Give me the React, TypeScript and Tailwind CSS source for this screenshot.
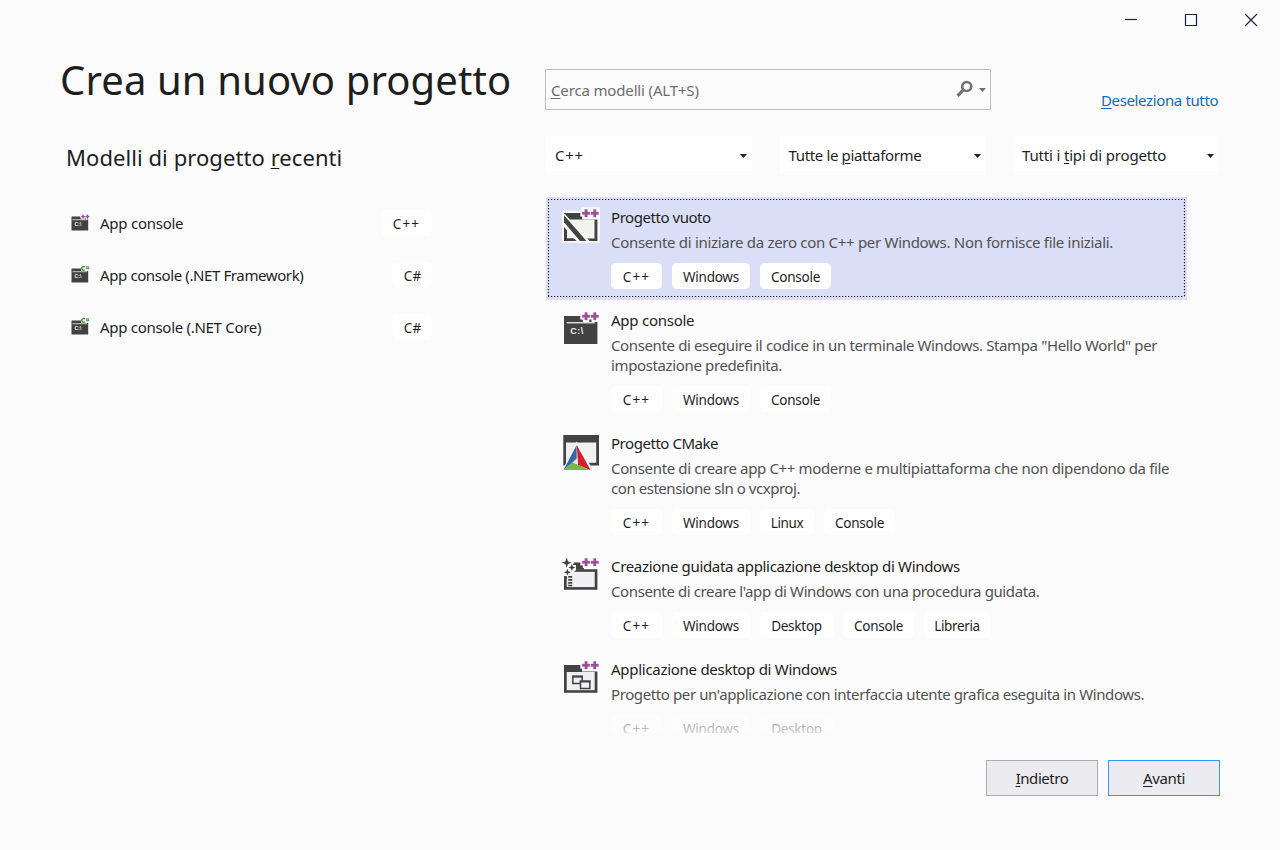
import React from "react";

type IconName = "empty" | "console" | "cmake" | "wizard" | "desktop";

const DARK = "#424242";
const PURPLE = "#9b4f96";
const PLUSES = "M22.8 3.5h2.5v2.5h2.5v2.5h-2.5V11h-2.5V8.5h-2.5V6h2.5zM31.5 3.5H34v2.5h2.5v2.5H34V11h-2.5V8.5H29V6h2.5z";

function PlusPlus() {
  return (
    <>
      <path d={PLUSES} fill="#fbfbfb" stroke="#fbfbfb" strokeWidth="4" />
      <path d={PLUSES} fill={PURPLE} stroke={PURPLE} strokeWidth="0.3" />
    </>
  );
}

function TemplateIcon({ name }: { name: IconName }) {
  return (
    <svg className="block h-[38px] w-[38px]" viewBox="0 0 38 38">
      {name === "empty" && (
        <>
          <path d="M0 4.7h19V1.3h19v35.4H0z" fill="#f8f8f8" />
          <path d="M2 7h18v6.5h15.4V35H2z" fill={DARK} />
          <path d="M5 13.5h27.5v19H5z" fill="#f2f2f1" />
          <path d="M0 5l29 31.5H15L0 19z" fill="#f8f8f8" />
          <path d="M2 9.3L24.5 35H18L2 16.3z" fill={DARK} />
          <path d="M2 21v14h12.5l-2.3-2.5H4.7v-8.3z" fill={DARK} />
          <path d="M3.5 7H19v6H9z" fill={DARK} />
          <PlusPlus />
        </>
      )}
      {name === "console" && (
        <>
          <path d="M2 7h33.4v28H2z" fill={DARK} />
          <path d="M4.7 13.1h28v1.3h-28z" fill="#f0f0f0" />
          <text x="8.3" y="25" fill="#f3f3f3" fontSize="9" fontWeight="700" fontFamily="Liberation Sans, Arial, sans-serif" textLength="13">C:\</text>
          <PlusPlus />
        </>
      )}
      {name === "cmake" && (
        <>
          <path d="M1.3 3H37v30.5H1.3z" fill={DARK} />
          <path d="M4 10.5h30.2v20.3H4z" fill="#f0eff1" />
          <path d="M14.7 9.5L0 39h31.5z" fill="#fbfbfb" />
          <path d="M14.7 13v14L1.3 38.3z" fill="#3568a8" />
          <path d="M14.7 13l14 25.3-12.6-5.4z" fill="#d4202c" />
          <path d="M1.3 38.3l9.2-8 18.2 8z" fill="#79b943" />
          <path d="M14.7 26.4l1.3 6.3-5.5-2.3z" fill="#e3e6e8" />
        </>
      )}
      {name === "wizard" && (
        <>
          <path d="M12 7.5h10v7H9z" fill={DARK} />
          <path d="M2 14.2h33.4v20.6H2z" fill={DARK} />
          <path d="M4.7 16.8h28v15.3h-28z" fill="#f0eff1" />
          <path d="M0 3h10v7h4v5l-4 4H8v3H0z" fill="#fbfbfb" />
          <path d="M4.7 2.6l1.3 3.8 3.8 1.3L6 9l-1.3 3.8L3.4 9-.4 7.7l3.8-1.3zM9.9 8.8l1 2.6 2.6 1-2.6 1-1 2.6-1-2.6-2.6-1 2.6-1zM5.4 13.8l1 2.4 2.4 1-2.4 1-1 2.4-1-2.4-2.4-1 2.4-1z" fill={DARK} />
          <path d="M6.2 21h4v1.7h-4zM6.2 24h4v1.7h-4zM6.2 27h4v1.7h-4zM6.2 29.8h4v1.4h-4zM2 21h2.7v3H2z" fill={DARK} />
          <PlusPlus />
        </>
      )}
      {name === "desktop" && (
        <>
          <path d="M2 7h18v6.5h15.4v21.3H2z" fill={DARK} />
          <path d="M4.7 14h28v18.2h-28z" fill="#f0eff1" />
          <path d="M10.8 18.4h9.4v7.2h-9.4z" fill="#f0eff1" stroke={DARK} strokeWidth="1.5" />
          <path d="M18.5 23.2h9.3v7.2h-9.3z" fill="#f0eff1" stroke={DARK} strokeWidth="1.5" />
          <path d="M10 17.6h11v2H10zM17.8 22.4h10.8v2H17.8z" fill={DARK} />
          <PlusPlus />
        </>
      )}
    </svg>
  );
}

function SmallIcon({ sharp }: { sharp?: boolean }) {
  return (
    <svg className="block h-[19px] w-[19px]" viewBox="0 0 38 38">
      <path d="M1 7h33.4v28H1z" fill={DARK} />
      <path d="M3 12.6h29v1.8H3z" fill="#d8d8d8" />
      <text x="7" y="26" fill="#f0f0f0" fontSize="10" fontWeight="700" fontFamily="Liberation Sans, Arial, sans-serif" textLength="14">C:\</text>
      {sharp ? (
        <>
          <path d="M20 0h18v12H20z" fill="#fbfbfb" />
          <path d="M28 3.8a3.8 3.8 0 1 0 0 5.8" fill="none" stroke="#388a34" strokeWidth="2.6" />
          <path d="M31.5 2v7M34.5 2v7M29.8 4.2h6.7M29.8 7h6.7" stroke="#388a34" strokeWidth="1.3" />
        </>
      ) : (
        <PlusPlus />
      )}
    </svg>
  );
}

const chipWidths: Record<string, string> = {
  "C++": "w-[51px] tracking-[1.2px]",
  "C#": "w-[39px]",
  Windows: "w-[78px] tracking-[-0.25px]",
  Console: "w-[71px] tracking-[-0.25px]",
  Linux: "w-[54px] tracking-[-0.35px]",
  Desktop: "w-[73px] tracking-[-0.25px]",
  Libreria: "w-[66px] tracking-[-0.35px]",
};

function Chip({ label }: { label: string }) {
  return (
    <span className={`flex h-[26px] items-center justify-center rounded-[5px] bg-white pt-px text-[13.5px] leading-5 ${chipWidths[label]}`}>
      {label}
    </span>
  );
}

function Caret({ className }: { className: string }) {
  return (
    <svg className={`block h-1 w-[7px] shrink-0 ${className}`} viewBox="0 0 7 4">
      <path d="M0 0h7L3.5 4z" fill="currentColor" />
    </svg>
  );
}

const recents = [
  { title: "App console", lang: "C++", track: "tracking-[-0.25px]" },
  { title: "App console (.NET Framework)", lang: "C#", track: "tracking-[-0.39px]" },
  { title: "App console (.NET Core)", lang: "C#", track: "tracking-[-0.29px]" },
];

const templates: { icon: IconName; title: string; track: string; lines: { text: string; track: string }[]; tags: string[] }[] = [
  {
    icon: "empty",
    title: "Progetto vuoto",
    track: "tracking-[-0.45px]",
    lines: [{ text: "Consente di iniziare da zero con C++ per Windows. Non fornisce file iniziali.", track: "tracking-[-0.3px]" }],
    tags: ["C++", "Windows", "Console"],
  },
  {
    icon: "console",
    title: "App console",
    track: "tracking-[-0.25px]",
    lines: [
      { text: 'Consente di eseguire il codice in un terminale Windows. Stampa "Hello World" per', track: "tracking-[-0.375px]" },
      { text: "impostazione predefinita.", track: "tracking-[-0.37px]" },
    ],
    tags: ["C++", "Windows", "Console"],
  },
  {
    icon: "cmake",
    title: "Progetto CMake",
    track: "tracking-[-0.46px]",
    lines: [
      { text: "Consente di creare app C++ moderne e multipiattaforma che non dipendono da file", track: "tracking-[-0.35px]" },
      { text: "con estensione sln o vcxproj.", track: "tracking-[-0.45px]" },
    ],
    tags: ["C++", "Windows", "Linux", "Console"],
  },
  {
    icon: "wizard",
    title: "Creazione guidata applicazione desktop di Windows",
    track: "tracking-[-0.33px]",
    lines: [{ text: "Consente di creare l'app di Windows con una procedura guidata.", track: "tracking-[-0.395px]" }],
    tags: ["C++", "Windows", "Desktop", "Console", "Libreria"],
  },
  {
    icon: "desktop",
    title: "Applicazione desktop di Windows",
    track: "tracking-[-0.28px]",
    lines: [{ text: "Progetto per un'applicazione con interfaccia utente grafica eseguita in Windows.", track: "tracking-[-0.395px]" }],
    tags: ["C++", "Windows", "Desktop"],
  },
];

function Key({ children }: { children: string }) {
  return <span className="underline decoration-1 underline-offset-2">{children}</span>;
}

export default function App() {
  return (
    <div className="flex h-[850px] w-[1280px] flex-col overflow-hidden bg-[#fbfbfb] font-['Noto_Sans',sans-serif] text-[15px] leading-5 text-[#1e1e1e]">
      <header className="flex h-10 shrink-0 justify-end">
        <button className="flex w-[60px] items-center justify-center">
          <svg className="h-5 w-5" viewBox="0 0 20 20"><path d="M5 9.5h12" stroke="#15233c" strokeWidth="1.2" /></svg>
        </button>
        <button className="flex w-[60px] items-center justify-center">
          <svg className="h-5 w-5" viewBox="0 0 20 20"><path d="M5.5 4.5h11v11h-11z" fill="none" stroke="#15233c" strokeWidth="1.2" /></svg>
        </button>
        <button className="flex w-[60px] items-center justify-center">
          <svg className="h-5 w-5" viewBox="0 0 20 20"><path d="M5 4l12 12M17 4L5 16" stroke="#15233c" strokeWidth="1.1" /></svg>
        </button>
      </header>

      <main className="flex h-[695px] shrink-0">
        <section className="flex w-[545px] shrink-0 flex-col pl-[60px]">
          <h1 className="mt-3 h-14 whitespace-nowrap text-[40px] leading-[56px] tracking-[0.12px]">Crea un nuovo progetto</h1>
          <h2 className="mt-[33px] h-8 whitespace-nowrap pl-[6px] text-[22px] leading-8 tracking-[0.07px]">
            Modelli di progetto <Key>r</Key>ecenti
          </h2>
          <ul className="mt-6 w-[372px]">
            {recents.map((r) => (
              <li key={r.title} className="flex h-[52px] items-center pl-[11px]">
                <span className="-mt-0.5"><SmallIcon sharp={r.lang === "C#"} /></span>
                <span className={`ml-[10px] flex-1 whitespace-nowrap ${r.track}`}>{r.title}</span>
                <span><Chip label={r.lang} /></span>
              </li>
            ))}
          </ul>
        </section>

        <section className="flex flex-1 flex-col pt-[29px]">
          <div className="flex h-[41px]">
            <div className="flex w-[446px] items-center border border-[#b9c0cd] pl-[5px] pr-1 text-[#6d6d6d]">
              <span className="flex-1 tracking-[-0.15px]"><Key>C</Key>erca modelli (ALT+S)</span>
              <svg className="mb-0.5 h-[18px] w-[18px]" viewBox="0 0 18 18">
                <circle cx="10.7" cy="6.5" r="4.5" fill="none" stroke="#717171" strokeWidth="2.6" />
                <path d="M7.7 9.7L1.5 15.8" stroke="#717171" strokeWidth="3.2" />
              </svg>
              <Caret className="ml-[5px] text-[#717171]" />
            </div>
            <a className="ml-[110px] mt-[21px] whitespace-nowrap tracking-[-0.37px] text-[#0e6cc4]"><Key>D</Key>eseleziona tutto</a>
          </div>

          <div className="ml-px mt-[26px] flex h-[39px] w-[673px] justify-between">
            <div className="flex w-[206px] items-center bg-white pl-[9px] pr-[5px]">
              <span className="flex-1 pb-0.5 tracking-[0.7px]">C++</span>
              <Caret className="text-[#15233c]" />
            </div>
            <div className="flex w-[206px] items-center bg-white pl-[9px] pr-[5px]">
              <span className="flex-1 pb-0.5 tracking-[-0.36px]">Tutte le <Key>p</Key>iattaforme</span>
              <Caret className="text-[#15233c]" />
            </div>
            <div className="flex w-[206px] items-center bg-white pl-[9px] pr-[5px]">
              <span className="flex-1 pb-0.5 tracking-[-0.17px]">Tutti i <Key>t</Key>ipi di progetto</span>
              <Caret className="text-[#15233c]" />
            </div>
          </div>

          <div className="relative ml-px mt-[22px] h-[536px] w-[641px] overflow-hidden">
            {templates.map((t, i) => (
              <article key={t.title} className={`relative flex pb-[11px] pl-4 pt-[10px] ${i === 0 ? "bg-[#dadff7]" : ""}`}>
                {i === 0 && (
                  <svg className="absolute inset-0 h-full w-full" viewBox="0 0 641 103">
                    <path d="M2 2.5h636M2 99.5h636M2.5 2v98M638.5 2v98" stroke="#1e1e1e" strokeWidth="1.2" strokeDasharray="1.2 1.8" />
                  </svg>
                )}
                <div className="-mt-px w-[49px] shrink-0"><TemplateIcon name={t.icon} /></div>
                <div>
                  <h3 className={`whitespace-nowrap ${t.track}`}>{t.title}</h3>
                  <div className="mt-[5px] text-[#515151]">
                    {t.lines.map((l) => (
                      <p key={l.text} className={`whitespace-nowrap ${l.track}`}>{l.text}</p>
                    ))}
                  </div>
                  <div className="mt-[11px] flex gap-[10px]">
                    {t.tags.map((tag) => <Chip key={tag} label={tag} />)}
                  </div>
                </div>
              </article>
            ))}
            <div className="absolute inset-x-0 bottom-0 h-[24px] bg-gradient-to-b from-[#fbfbfb]/30 to-[#fbfbfb]/80" />
          </div>
        </section>
      </main>

      <footer className="flex shrink-0 justify-end gap-[10px] pr-[60px] pt-[25px]">
        <button className="h-9 w-28 border border-[#acacac] bg-[#ececf0] tracking-[-0.45px]"><Key>I</Key>ndietro</button>
        <button className="h-9 w-28 border border-[#3399ff] bg-[#ececf0] tracking-[-0.4px]"><Key>A</Key>vanti</button>
      </footer>
    </div>
  );
}
